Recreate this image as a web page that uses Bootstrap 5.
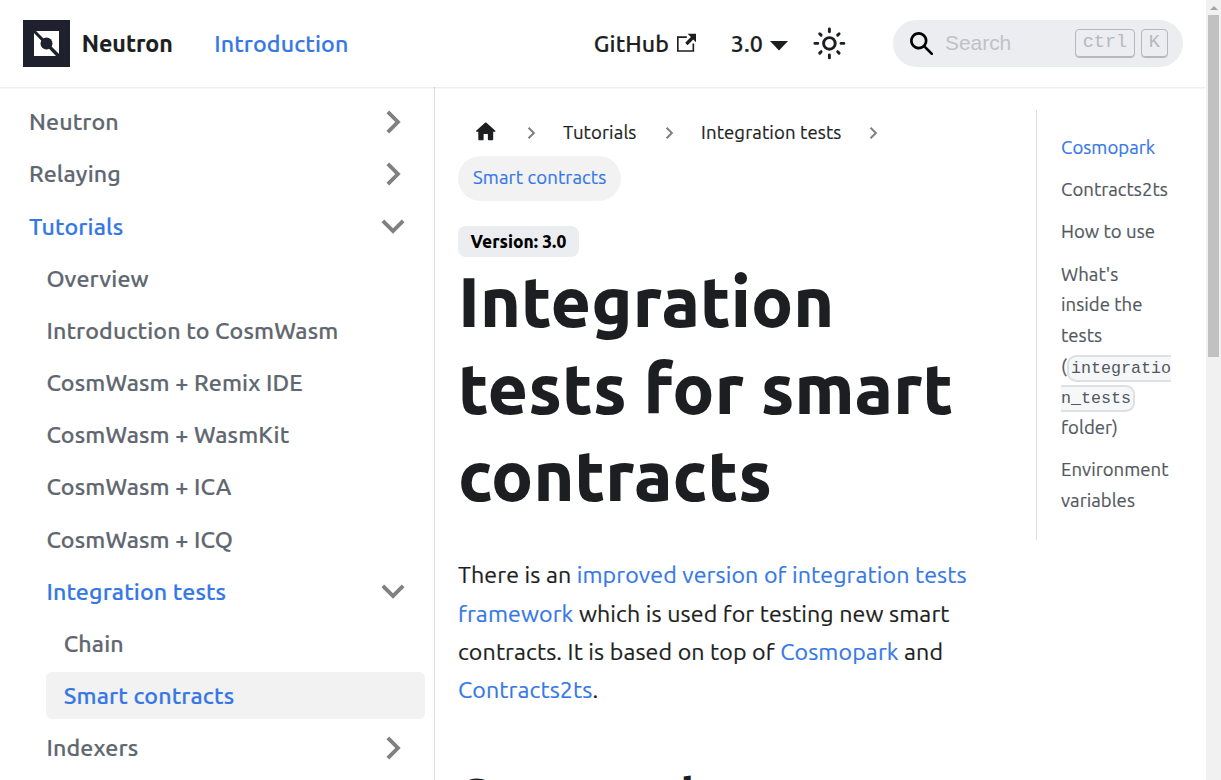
<!DOCTYPE html>
<html lang="en">
<head>
<meta charset="utf-8">
<meta name="viewport" content="width=device-width, initial-scale=1">
<title>Integration tests for smart contracts | Neutron</title>
<link rel="stylesheet" href="https://cdn.jsdelivr.net/npm/bootstrap@5.3.0/dist/css/bootstrap.min.css">
<style>
:root{font-size:23.2px;--ink:#1c1e21;--brand:#3578e5;--soft:#606770}
html,body{height:100%;overflow:hidden}
body{font-family:Ubuntu,"Noto Sans",sans-serif;font-size:1rem;line-height:1.65;color:var(--ink);background:#fff;padding-right:15px;letter-spacing:.12px}
a{color:var(--brand);text-decoration:none}
svg{display:block;flex:none}
.topbar{height:3.75rem;padding:.5rem 1rem;box-shadow:0 1px 2px rgba(0,0,0,.1);z-index:5;position:relative;font-weight:500;line-height:36px}
.topbar a{padding-bottom:1px;-webkit-text-stroke:.2px}
.brandmark{width:47px;height:47px;margin-right:11.5px}
.topbar .brandname{font-weight:700;color:var(--ink);width:132.5px;letter-spacing:0}
.topbar .toplink{color:var(--ink)}
.searchbox{width:290px;height:47px;border-radius:24px;background:#ebedf0;padding:0 15px 0 17px;margin-left:46px;letter-spacing:0}
.searchbox .hint{font:20.9px "Liberation Sans",sans-serif;color:#bdc2c8;margin-left:12px;margin-top:-1px}
.keycap{font:18.56px/26px "Liberation Mono",monospace;color:#b4b9be;border:1px solid #b4b9be;border-radius:4px;height:29px;padding:0 7px;box-shadow:inset 0 -1px 0 #b4b9be;background:none;box-sizing:border-box}
.keycap.wide{padding:0 6.5px}
.side{width:435px;border-right:1px solid #dadde1;padding:.5rem 9px 0 .5rem;letter-spacing:.13px}
.side ul{list-style:none;margin:0;padding:0}
.side ul ul{padding-left:.75rem}
.side .item{height:2rem;margin-bottom:5.79px;padding-left:.75rem;padding-right:9px;color:var(--soft);font-weight:500;line-height:1.25;border-radius:.25rem;-webkit-text-stroke:.2px}
.side .item.on{color:var(--brand)}
.side .current{background:#f2f2f2}
.article{width:579px;padding:1rem 1rem 0 23px}
.crumbs{font-size:.8rem;row-gap:1px;list-style:none;margin:0 0 25px;padding:0}
.crumbs a{display:block;height:45px;line-height:45px;padding:0 15px;color:var(--ink)}
.crumbs .here{background:#f2f2f2;color:var(--brand);border-radius:2rem;line-height:43px}
.crumbs,.article p,.toc{-webkit-text-stroke:.2px}
.verpill{display:inline-block;background:#ebedf0;color:#000;font-size:17.4px;font-weight:800;letter-spacing:0;line-height:31px;height:31px;padding:0 12.5px;border-radius:8px;vertical-align:top}
h1.title{font-size:3rem;line-height:1.25;font-weight:800;letter-spacing:.04px;margin:-6px 0 36px}
.article p{margin:0 0 56px;line-height:1.65}
h2.sub{font-size:2rem;font-weight:800;line-height:1.25;margin:0}
.toc{width:169px;margin-left:22px;margin-top:23px;border-left:1px solid #dadde1;height:430px;padding:23px 33px 0 24px;font-size:.8rem;letter-spacing:.04px}
.toc a{display:block;color:#525860;margin-bottom:.5rem}
.toc a.on{color:var(--brand)}
.toc code{font:16.7px "Liberation Mono",monospace;color:inherit;background:#f6f7f8;border:2px solid #dfe0e2;border-radius:.4rem;padding:2px;overflow-wrap:break-word;letter-spacing:0;-webkit-text-stroke:0}
.scroller{right:0;top:0;width:15px;height:100%;background:#f1f1f1;z-index:9}
.scroller i{position:absolute;left:2px;top:15px;width:11px;height:342px;background:#c1c1c1}
.scroller svg{margin:6px 0 0 4px}
</style>
</head>
<body>
<svg class="d-none"><defs>
<path id="chev" d="M7.41 15.41L12 10.83l4.59 4.58L18 14l-6-6-6 6z"/>
</defs></svg>
<header class="topbar d-flex align-items-center">
  <svg class="brandmark" viewBox="0 0 47 47"><path fill="#1f202e" d="M0 0h47v47H0z"/><path fill="#fff" d="M13 11h23v23zM11 13v23h22z"/><path stroke="#1f202e" stroke-width="2.200" d="M10 10l27 27"/><circle cx="23.500" cy="23.500" r="6" fill="#1f202e"/></svg>
  <a class="brandname" href="#">Neutron</a>
  <a href="#">Introduction</a>
  <div class="d-flex align-items-center ms-auto">
    <a class="toplink d-flex align-items-center" href="#">GitHub<svg width="19.600" height="19.600" viewBox="0 0 24 24" fill="currentColor" style="margin-left:7.5px"><path d="M21 13v10h-21v-19h12v2h-10v15h17v-8h2zm3-12h-10.988l4.035 4-6.977 7.070 2.828 2.828 6.977-7.070 4.125 4.172v-11z"/></svg></a>
    <a class="toplink d-flex align-items-center" href="#" style="margin-left:34.5px">3.0<svg width="18" height="10" viewBox="0 0 18 10" fill="currentColor" style="margin:5px 0 0 7px"><path d="M0 0h18L9 9.500z"/></svg></a>
    <svg width="34.800" height="34.800" viewBox="0 0 24 24" fill="none" stroke="#1c1e21" stroke-width="2" stroke-linecap="round" style="margin-left:24px"><circle cx="12" cy="12" r="4"/><path d="M2 12h2M20 12h2M12 2v2M12 20v2M5.300 5.300l1 1M17.700 17.700l1 1M5.300 18.700l1-1M17.700 6.300l1-1"/></svg>
    <div class="searchbox d-flex align-items-center">
      <svg width="23.200" height="23.200" viewBox="0 0 16 16"><path d="M6.029 10.203a4.174 4.174 0 1 1 4.174-4.174 4.156 4.156 0 0 1-4.174 4.174zm9.692 4.220L10.899 9.600a5.880 5.880 0 0 0 1.159-3.571A6.005 6.005 0 1 0 9.600 10.899l4.823 4.823a.897.897 0 0 0 1.299 0 .897.897 0 0 0-.001-1.299z"/></svg>
      <span class="hint">Search</span>
      <kbd class="keycap wide ms-auto">ctrl</kbd><kbd class="keycap" style="margin-left:6px">K</kbd>
    </div>
  </div>
</header>
<div class="d-flex align-items-stretch" style="height:calc(100% - 87px)">
  <nav class="side flex-shrink-0">
    <ul>
      <li><a class="item d-flex align-items-center" href="#">Neutron<svg class="ms-auto" width="46" height="46" viewBox="0 0 24 24" fill="#808080"><use href="#chev" transform="rotate(90 12 12)"/></svg></a></li>
      <li><a class="item d-flex align-items-center" href="#">Relaying<svg class="ms-auto" width="46" height="46" viewBox="0 0 24 24" fill="#808080"><use href="#chev" transform="rotate(90 12 12)"/></svg></a></li>
      <li><a class="item on d-flex align-items-center" href="#">Tutorials<svg class="ms-auto" width="46" height="46" viewBox="0 0 24 24" fill="#808080"><use href="#chev" transform="rotate(180 12 12)"/></svg></a>
        <ul>
          <li><a class="item d-flex align-items-center" href="#">Overview</a></li>
          <li><a class="item d-flex align-items-center" href="#">Introduction to CosmWasm</a></li>
          <li><a class="item d-flex align-items-center" href="#">CosmWasm + Remix IDE</a></li>
          <li><a class="item d-flex align-items-center" href="#">CosmWasm + WasmKit</a></li>
          <li><a class="item d-flex align-items-center" href="#">CosmWasm + ICA</a></li>
          <li><a class="item d-flex align-items-center" href="#">CosmWasm + ICQ</a></li>
          <li><a class="item on d-flex align-items-center" href="#">Integration tests<svg class="ms-auto" width="46" height="46" viewBox="0 0 24 24" fill="#808080"><use href="#chev" transform="rotate(180 12 12)"/></svg></a>
            <ul>
              <li><a class="item d-flex align-items-center" href="#">Chain</a></li>
              <li><a class="item on current d-flex align-items-center" href="#">Smart contracts</a></li>
            </ul></li>
          <li><a class="item d-flex align-items-center" href="#">Indexers<svg class="ms-auto" width="46" height="46" viewBox="0 0 24 24" fill="#808080"><use href="#chev" transform="rotate(90 12 12)"/></svg></a></li>
        </ul></li>
    </ul>
  </nav>
  <main class="article flex-shrink-0">
    <ul class="crumbs d-flex flex-wrap align-items-center">
      <li><a href="#" aria-label="Home" class="d-flex align-items-center"><svg width="25.500" height="25.500" viewBox="0 0 24 24" fill="currentColor" style="margin-top:-1px"><path d="M10 19v-5h4v5c0 .55.45 1 1 1h3c.55 0 1-.45 1-1v-7h1.700c.46 0 .68-.57.33-.87L12.670 3.600c-.38-.34-.96-.34-1.340 0l-8.360 7.530c-.34.3-.13.87.33.87H5v7c0 .55.45 1 1 1h3c.55 0 1-.45 1-1z"/></svg></a></li>
      <li class="sep"><svg width="34.500" height="24" viewBox="-5 0 34 24" fill="#808080"><use href="#chev" transform="rotate(90 12 12)"/></svg></li>
      <li><a href="#">Tutorials</a></li>
      <li class="sep"><svg width="34.500" height="24" viewBox="-5 0 34 24" fill="#808080"><use href="#chev" transform="rotate(90 12 12)"/></svg></li>
      <li><a href="#">Integration tests</a></li>
      <li class="sep"><svg width="34.500" height="24" viewBox="-5 0 34 24" fill="#808080"><use href="#chev" transform="rotate(90 12 12)"/></svg></li>
      <li><a class="here" href="#">Smart contracts</a></li>
    </ul>
    <span class="verpill">Version: 3.0</span>
    <h1 class="title">Integration tests for smart contracts</h1>
    <p>There is an <a href="#">improved version of integration tests framework</a> which is used for testing new smart contracts. It is based on top of <a href="#">Cosmopark</a> and <a href="#">Contracts2ts</a>.</p>
    <h2 class="sub">Cosmopark</h2>
  </main>
  <aside class="toc flex-shrink-0">
    <a class="on" href="#">Cosmopark</a>
    <a href="#">Contracts2ts</a>
    <a href="#">How to use</a>
    <a href="#">What's<br>inside the<br>tests<br>(<code>integration_tests</code> folder)</a>
    <a href="#">Environment variables</a>
  </aside>
</div>
<div class="scroller position-fixed"><svg width="8" height="4"><path fill="#a3a3a3" d="M4 0l4 4H0z"/></svg><i></i></div>
<script src="https://cdn.jsdelivr.net/npm/bootstrap@5.3.0/dist/js/bootstrap.bundle.min.js"></script>
</body>
</html>
